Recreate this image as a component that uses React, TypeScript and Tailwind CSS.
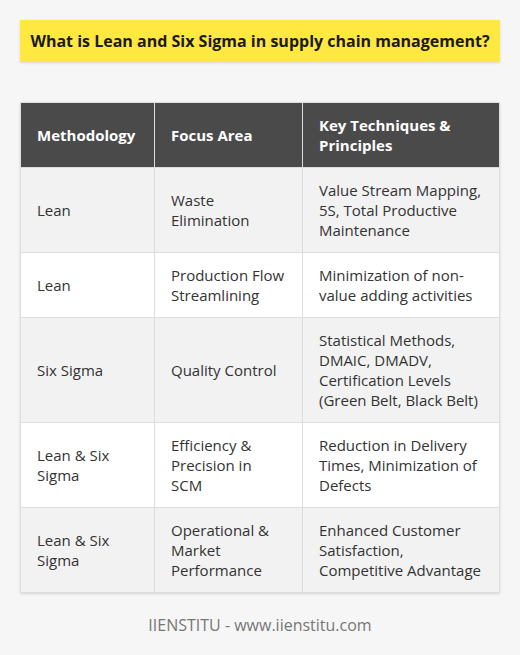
import React from 'react';

interface Row {
  method: string;
  focus: string;
  techniques: string;
}

const rows: Row[] = [
  { method: 'Lean', focus: 'Waste Elimination', techniques: 'Value Stream Mapping, 5S, Total Productive Maintenance' },
  { method: 'Lean', focus: 'Production Flow Streamlining', techniques: 'Minimization of non-value adding activities' },
  {
    method: 'Six Sigma',
    focus: 'Quality Control',
    techniques: 'Statistical Methods, DMAIC, DMADV, Certification Levels (Green Belt, Black Belt)',
  },
  {
    method: 'Lean & Six Sigma',
    focus: 'Efficiency & Precision in SCM',
    techniques: 'Reduction in Delivery Times, Minimization of Defects',
  },
  {
    method: 'Lean & Six Sigma',
    focus: 'Operational & Market Performance',
    techniques: 'Enhanced Customer Satisfaction, Competitive Advantage',
  },
];

export default function App() {
  return (
    <div className="min-h-[655px] w-[520px] bg-[#f6f6f6] px-5 pt-5 font-['Open_Sans',sans-serif]">
      {/* Title banner */}
      <div className="flex h-[42px] items-center justify-center bg-[#ffe83f] shadow-sm">
        <h1 className="text-[16px] font-bold text-[#1a1a1a]">
          What is Lean and Six Sigma in supply chain management?
        </h1>
      </div>

      {/* Table */}
      <table className="mt-10 w-full table-fixed border-collapse text-[15px] leading-5 shadow-sm">
        <colgroup>
          <col className="w-[134px]" />
          <col className="w-[148px]" />
          <col />
        </colgroup>
        <thead>
          <tr className="bg-[#4a4a4a] text-left text-white">
            <th className="border border-[#dddddd] px-4 py-3 font-bold">Methodology</th>
            <th className="border border-[#dddddd] px-4 py-3 font-bold">Focus Area</th>
            <th className="border border-[#dddddd] px-4 py-3 font-bold">Key Techniques &amp; Principles</th>
          </tr>
        </thead>
        <tbody>
          {rows.map((r, i) => (
            <tr key={i} className={i % 2 === 0 ? 'bg-[#f2f2f2] text-[#333333]' : 'bg-white text-[#333333]'}>
              <td className="border border-[#dddddd] px-4 py-3 align-middle">{r.method}</td>
              <td className="border border-[#dddddd] px-4 py-3 align-middle">{r.focus}</td>
              <td className="border border-[#dddddd] px-4 py-3 align-middle">{r.techniques}</td>
            </tr>
          ))}
        </tbody>
      </table>

      {/* Footer */}
      <p className="mt-5 text-center text-[16px] leading-6 text-[#777777]">IIENSTITU - www.iienstitu.com</p>
    </div>
  );
}
